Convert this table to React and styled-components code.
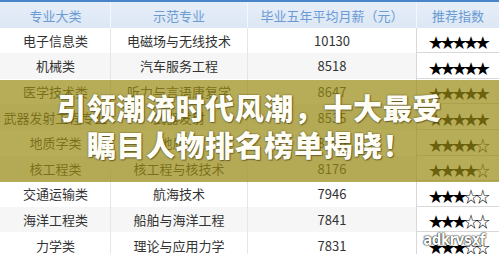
import React from 'react';
import styled, { createGlobalStyle } from 'styled-components';

const GlobalStyle = createGlobalStyle`
  html, body {
    margin: 0;
    padding: 0;
    background: #fff;
  }
`;

const Frame = styled.div`
  position: relative;
  width: 499px;
  height: 254px;
  overflow: hidden;
  background: #fff;
  font-family: "Noto Sans CJK SC", "Noto Sans", sans-serif;
`;

const Table = styled.div`
  display: grid;
  grid-template-columns: 110px 137px 169px 83px;
  grid-auto-rows: 25.6px;
  border-top: 2px solid #4b85c9;
`;

const HeadCell = styled.div`
  height: 27px;
  display: flex;
  align-items: center;
  justify-content: center;
  background: linear-gradient(#e6eef9, #dce7f5);
  border-left: 1px solid ${p => (p.first ? 'transparent' : '#f4f8fd')};
  color: #6a9bd2;
  font-size: 13px;
  white-space: nowrap;
`;

const Cell = styled.div`
  display: flex;
  align-items: center;
  justify-content: center;
  background: ${p => (p.even ? '#f6f6f6' : '#fff')};
  border-left: 1px solid ${p => (p.first ? 'transparent' : '#e6e6e6')};
  color: #333;
  font-size: 13px;
  white-space: nowrap;
`;

const StarCell = styled.div`
  display: flex;
  align-items: center;
  justify-content: center;
  padding-top: 5px;
  box-sizing: border-box;
  background: #fff;
  border-left: 1px solid #d8d8d8;
  border-bottom: 1px solid #d8d8d8;
  font-family: "Noto Sans CJK SC", sans-serif;
  font-size: 14.5px;
  line-height: 1;
  letter-spacing: -2.8px;
  color: #000;
`;

const Band = styled.div`
  position: absolute;
  left: 0;
  right: 0;
  top: 80px;
  height: 102px;
  padding-top: 9px;
  box-sizing: border-box;
  background: rgba(153, 138, 19, 0.7);
  display: flex;
  flex-direction: column;
  align-items: center;
`;

const Headline = styled.div`
  font-family: "Noto Sans CJK SC", sans-serif;
  font-weight: 900;
  font-size: 29px;
  line-height: 37px;
  letter-spacing: 0.6px;
  color: #fffef6;
  white-space: nowrap;
  text-shadow: 0 0 2px rgba(70, 60, 0, 0.8), 1px 1px 1px rgba(0, 0, 0, 0.35);
`;

const Watermark = styled.div`
  position: absolute;
  right: 14px;
  top: 231px;
  font-family: "DejaVu Sans Condensed", "DejaVu Sans", sans-serif;
  font-weight: bold;
  font-size: 15px;
  letter-spacing: -0.5px;
  color: #fff;
  text-shadow: 0 0 2px #000, 0 0 1px #000;
`;

const rows = [
  ['电子信息类', '电磁场与无线技术', '10130', 5],
  ['机械类', '汽车服务工程', '8518', 5],
  ['医学技术类', '听力与言语康复学', '8647', 5],
  ['武器发射工程专业', '武器发射', '8535', 5],
  ['地质学类', '地质学', '8290', 4],
  ['核工程类', '核工程与核技术', '8176', 4],
  ['交通运输类', '航海技术', '7946', 3],
  ['海洋工程类', '船舶与海洋工程', '7841', 3],
  ['力学类', '理论与应用力学', '7831', 3],
];

const stars = n => '★'.repeat(n) + '☆'.repeat(5 - n);

const App = () => (
  <Frame>
    <GlobalStyle />
    <Table>
      <HeadCell first>专业大类</HeadCell>
      <HeadCell>示范专业</HeadCell>
      <HeadCell>毕业五年平均月薪（元）</HeadCell>
      <HeadCell>推荐指数</HeadCell>
      {rows.map(([cat, major, pay, score], i) => (
        <React.Fragment key={cat}>
          <Cell first even={i % 2 === 1}>{cat}</Cell>
          <Cell even={i % 2 === 1}>{major}</Cell>
          <Cell even={i % 2 === 1}>{pay}</Cell>
          <StarCell>{stars(score)}</StarCell>
        </React.Fragment>
      ))}
    </Table>
    <Band>
      <Headline>引领潮流时代风潮，十大最受</Headline>
      <Headline>瞩目人物排名榜单揭晓！</Headline>
    </Band>
    <Watermark>adkrvsxf</Watermark>
  </Frame>
);

export default App;
